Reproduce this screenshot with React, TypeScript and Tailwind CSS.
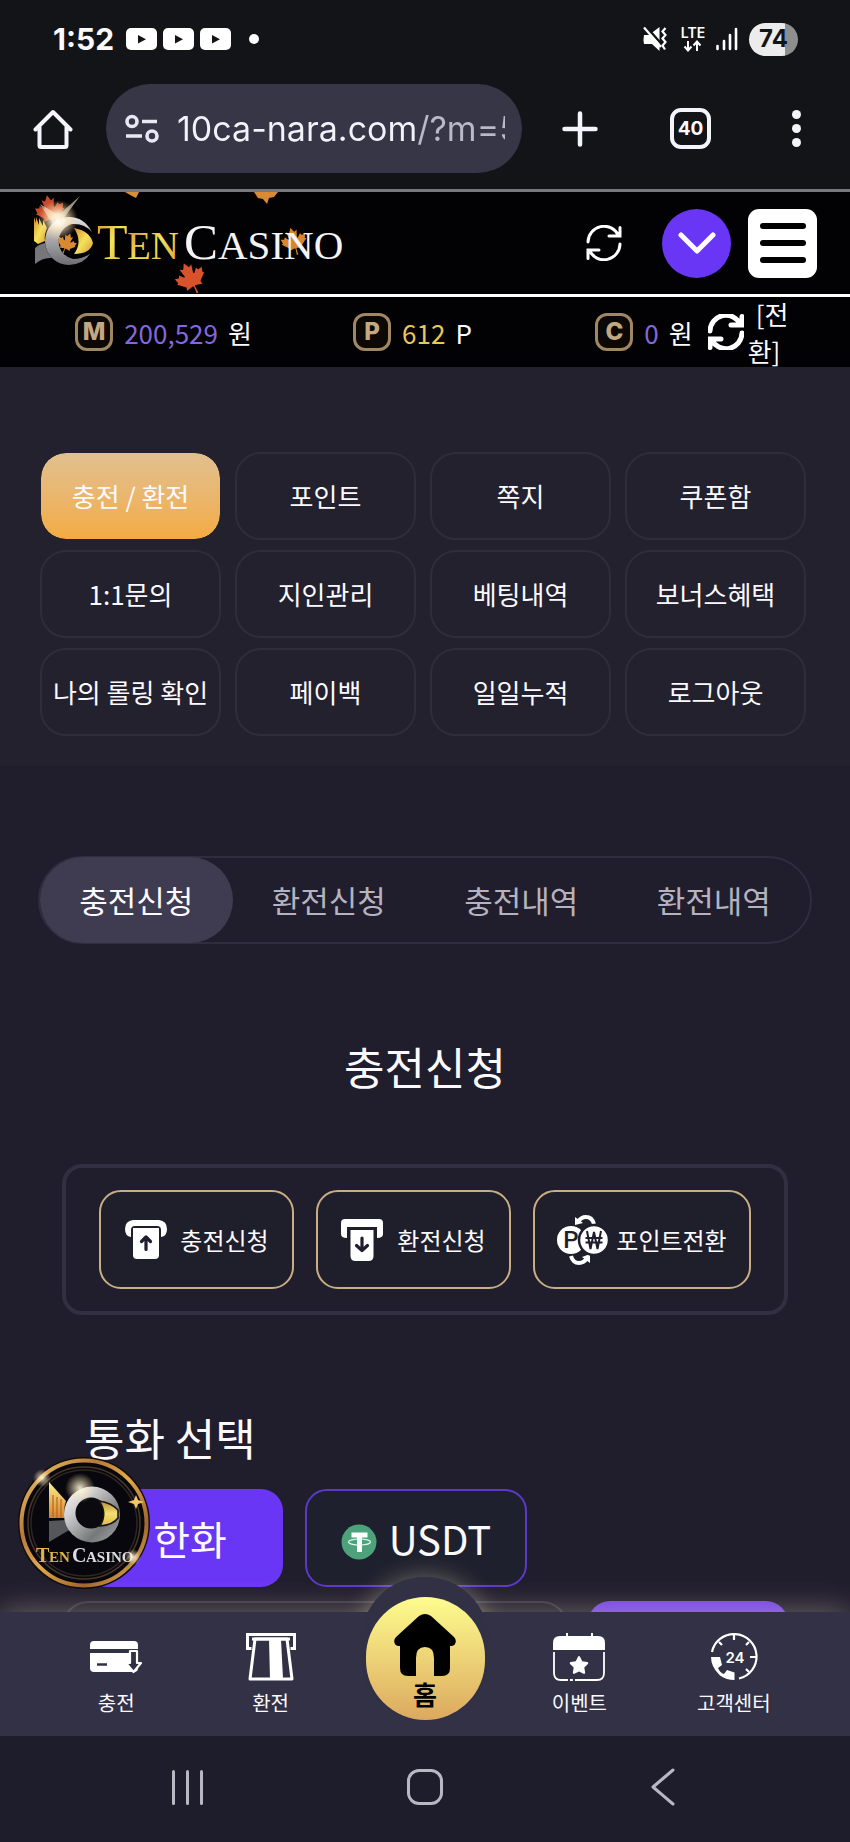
import React, { useState } from "react";
import { FaCanadianMapleLeaf, FaStar } from "react-icons/fa";

const menuItems = [
  "충전 / 환전",
  "포인트",
  "쪽지",
  "쿠폰함",
  "1:1문의",
  "지인관리",
  "베팅내역",
  "보너스혜택",
  "나의 롤링 확인",
  "페이백",
  "일일누적",
  "로그아웃",
];

const tabs = ["충전신청", "환전신청", "충전내역", "환전내역"];

const YoutubeIcon = () => (
  <svg width="31" height="22" viewBox="0 0 31 22">
    <rect width="31" height="22" rx="5" fill="#fff" />
    <path d="M12 7l8 4.300-8 4.300z" fill="#131418" />
  </svg>
);

const SyncIcon = ({ stroke }: { stroke: number }) => (
  <svg className="shrink-0" width="36" height="36" viewBox="0 0 36 36" fill="none" stroke="#fff" strokeWidth={stroke} strokeLinecap="round">
    <path d="M2 17A16 16 0 0 1 32.500 10.500M34 2.500v8.500h-11" />
    <path d="M34 19A16 16 0 0 1 3.500 25.500M2 33.500v-8.500h11" />
  </svg>
);

const StatusBar = () => (
  <div className="flex h-[84px] items-center justify-between pr-[52px] pb-[6px] pl-[53px]">
    <div className="flex items-center gap-[6px]">
      <span className="mr-[6px] font-['Inter'] text-[30px] leading-8 font-bold">1:52</span>
      <YoutubeIcon />
      <YoutubeIcon />
      <YoutubeIcon />
      <span className="ml-3 h-[10px] w-[10px] rounded-full bg-white" />
    </div>
    <div className="flex items-center">
      <svg width="25" height="26" viewBox="0 0 25 26">
        <path d="M1 9h5l10.500-8v24L9 18H1q-1-4.500 0-9z" fill="#fff" />
        <path d="M2.500 0L22 22" stroke="#131418" strokeWidth="2.500" />
        <path d="M1 1.500L18 21" stroke="#fff" strokeWidth="2.200" />
        <path d="M22.500 2l-3 3.500 3 3.500-3 3.500 3 3.500-3 3.500 2.500 4" stroke="#fff" strokeWidth="2.200" fill="none" />
      </svg>
      <svg className="ml-3" width="26" height="28" viewBox="0 0 26 28">
        <text x="13" y="13" textAnchor="middle" fontFamily="Inter" fontWeight="600" fontSize="14" fill="#fff">LTE</text>
        <path d="M8 16v9M4.500 21.500L8 25.500l3.500-4M17 26v-9.500M13.500 20.500l3.500-4 3.500 4" stroke="#fff" strokeWidth="2" fill="none" />
      </svg>
      <svg className="ml-[10px]" width="22" height="24" viewBox="0 0 22 24" stroke="#fff" strokeWidth="2.600" strokeLinecap="round">
        <path d="M1.500 19v3M8 14v8M14 8v14M20 2v20" />
      </svg>
      <span className="ml-[11px] flex h-[33px] w-[49px] items-center justify-center rounded-full bg-[linear-gradient(90deg,#ececec_74%,#8e8e8e_74%)] font-['Inter'] text-2xl leading-none font-bold text-[#131418]">
        74
      </span>
    </div>
  </div>
);

const AddressBar = () => (
  <div className="flex items-center pr-9 pb-4 pl-[33px]">
    <button aria-label="Home">
      <svg width="40" height="40" viewBox="0 0 40 40" fill="none" stroke="#f5f4fc" strokeWidth="4" strokeLinejoin="round" strokeLinecap="round">
        <path d="M2.500 20.500L20 3l17.500 17.500M6.500 18v18.500q0 1.500 1.500 1.500h24q1.500 0 1.500-1.500V18" />
      </svg>
    </button>
    <div className="ml-[33px] flex h-[89px] flex-1 items-center rounded-full bg-[#373646] pr-[17px] pl-[19px]">
      <svg className="shrink-0" width="34" height="30" viewBox="0 0 34 30" fill="none" stroke="#e8e7f4" strokeWidth="3.600">
        <circle cx="7" cy="7.500" r="5" />
        <circle cx="27" cy="22" r="5" />
        <path d="M17 7.500h15M1 22h16" />
      </svg>
      <input
        type="text"
        aria-label="Address"
        defaultValue="10ca-nara.com/?m=5"
        className="ml-[18px] h-12 w-full min-w-0 bg-[linear-gradient(90deg,#f3f2fb_240px,#bab8cb_240px)] bg-clip-text font-['Inter'] text-[34px] text-transparent outline-none"
      />
    </div>
    <button aria-label="New tab" className="ml-10">
      <svg width="36" height="36" viewBox="0 0 36 36" stroke="#f5f4fc" strokeWidth="4.500" strokeLinecap="round">
        <path d="M18 2.500v31M2.500 18h31" />
      </svg>
    </button>
    <button className="ml-[72px] flex h-[41px] w-[41px] items-center justify-center rounded-[11px] border-4 border-[#f5f4fc] font-['Inter'] text-[19px] leading-none font-bold">
      40
    </button>
    <button aria-label="Menu" className="ml-[67px] flex w-9 flex-col items-center gap-[5px]">
      <span className="h-[9px] w-[9px] rounded-full bg-[#f5f4fc]" />
      <span className="h-[9px] w-[9px] rounded-full bg-[#f5f4fc]" />
      <span className="h-[9px] w-[9px] rounded-full bg-[#f5f4fc]" />
    </button>
  </div>
);

const Logo = () => (
  <svg width="350" height="102" viewBox="0 0 350 102" role="img" aria-label="Ten Casino">
    <defs>
      <linearGradient id="gold" x1="0" x2="1" y1="0" y2="1">
        <stop offset="0" stopColor="#d98b2b" />
        <stop offset="0.500" stopColor="#f3e35c" />
        <stop offset="1" stopColor="#dd9a33" />
      </linearGradient>
      <linearGradient id="silver" x1="0" x2="0" y1="0" y2="1">
        <stop offset="0" stopColor="#e4e4e6" />
        <stop offset="0.500" stopColor="#a5a5a9" />
        <stop offset="1" stopColor="#6e6e72" />
      </linearGradient>
      <radialGradient id="flare">
        <stop offset="0" stopColor="#fff" />
        <stop offset="0.300" stopColor="#fff6dd" stopOpacity="0.900" />
        <stop offset="1" stopColor="#ffcf8a" stopOpacity="0" />
      </radialGradient>
    </defs>
    <g transform="rotate(-12 50 18)">
      <FaCanadianMapleLeaf x="34" y="3" size={32} color="#c8492a" />
    </g>
    <path d="M34 25l2 6v-6l3 8v-7l4 8v-6l4 8q-3 7-2 13l-7 3-4-3z" fill="url(#gold)" />
    <path d="M35 56q4-4 10-5 1 9 7 15-9-1-17 6z" fill="#77777b" />
    <path d="M92 40Q84 25 69 25A24 24 0 0 0 69 73Q84 72 90 62Q82 67 73 67A18 18 0 0 1 72 32Q84 31 92 40z" fill="url(#silver)" />
    <path d="M74 36q16 3 19 15-3 11-19 11 9-12 0-26z" fill="url(#gold)" />
    <g transform="rotate(20 67 52)">
      <FaCanadianMapleLeaf x="56" y="41" size={21} color="#d88a30" />
    </g>
    <circle cx="58" cy="28" r="20" fill="url(#flare)" />
    <path d="M55 26L80 4 61 30zM50 28L40 12 60 24z" fill="#ffeecb" opacity="0.600" />
    <path d="M125 0h14l-3 6-4-2z" fill="#d98f35" />
    <path d="M254 0h24l-4 5-5 1-2 6-4-5-5-1z" fill="#d98a35" />
    <g fontFamily="'Liberation Serif', serif">
      <text x="97" y="67" fontSize="50" fill="url(#gold)">T</text>
      <text x="127" y="67" fontSize="39" fill="url(#gold)">EN</text>
      <text x="184" y="67" fontSize="51" fill="#f4f4f6">C</text>
    </g>
    <g transform="rotate(-15 295 49)">
      <FaCanadianMapleLeaf x="280" y="35" size={28} color="#d8852b" />
    </g>
    <text x="218" y="67" fontSize="41" fill="#f4f4f6" fontFamily="'Liberation Serif', serif">ASINO</text>
    <g transform="rotate(-25 190 86)">
      <FaCanadianMapleLeaf x="174" y="70" size={33} color="#d8532b" />
    </g>
  </svg>
);

const Coin = ({ letter }: { letter: string }) => (
  <span className="flex h-[38px] w-[38px] items-center justify-center rounded-xl border-[3px] border-[#a08763] bg-[#0b0805] font-['Inter'] text-2xl leading-none font-extrabold text-[#c3a882]">
    {letter}
  </span>
);

const SiteHeader = () => (
  <header className="border-t-[3px] border-[#78767e] bg-[#020104]">
    <div className="flex h-[105px] items-center border-b-[3px] border-white pr-[33px]">
      <a href="#home">
        <Logo />
      </a>
      <button aria-label="Refresh" className="ml-auto">
        <SyncIcon stroke={3} />
      </button>
      <button aria-label="Open wallet" className="ml-10 flex h-[69px] w-[69px] items-center justify-center rounded-full bg-[#6a36f5]">
        <svg width="38" height="22" viewBox="0 0 38 22" fill="none" stroke="#fff" strokeWidth="5" strokeLinecap="round" strokeLinejoin="round">
          <path d="M3 3l16 16L35 3" />
        </svg>
      </button>
      <button aria-label="Open menu" className="ml-[17px] flex h-[69px] w-[69px] flex-col items-center justify-center gap-[11px] rounded-[11px] bg-white">
        <span className="h-[6px] w-[46px] rounded-full bg-black" />
        <span className="h-[6px] w-[46px] rounded-full bg-black" />
        <span className="h-[6px] w-[46px] rounded-full bg-black" />
      </button>
    </div>
    <div className="flex h-[70px] items-center pl-[39px] text-[26px]">
      <div className="flex flex-[249] items-center justify-center gap-[11px]">
        <Coin letter="M" />
        <p className="flex gap-[10px]"><span className="text-[#8467dc]">200,529</span>원</p>
      </div>
      <div className="flex flex-[249] items-center justify-center gap-[11px]">
        <Coin letter="P" />
        <p className="flex gap-[10px]"><span className="text-[#ecc65c]">612</span>P</p>
      </div>
      <div className="flex flex-[313] items-center justify-center gap-[11px]">
        <Coin letter="C" />
        <p className="flex gap-[10px]"><span className="text-[#8467dc]">0</span>원</p>
        <button className="ml-1 flex items-center gap-1 text-left leading-[37px]">
          <SyncIcon stroke={5} />
          <span className="w-11 indent-2">
            [전
            <br />
            환]
          </span>
        </button>
      </div>
    </div>
  </header>
);

const DepositIcon = () => (
  <svg width="44" height="40" viewBox="0 0 44 40">
    <path d="M9 0h26q8 1 8 9 0 7-6 8v-7q0-4-4-4H11q-4 0-4 4v7q-6-1-6-8 0-8 8-9z" fill="#fff" />
    <path d="M9 8h26v27q0 4-4 4H13q-4 0-4-4z" fill="#fff" />
    <path d="M22 29.500V18M17.500 21.500L22 17l4.500 4.500" stroke="#201d2d" strokeWidth="3.200" strokeLinecap="round" strokeLinejoin="round" fill="none" />
  </svg>
);

const WithdrawIcon = () => (
  <svg width="44" height="42" viewBox="0 0 44 42">
    <path d="M4 0h34q4 0 4 4v11q0 4-6 4V8H6v11q-6 0-6-4V4q0-4 4-4z" fill="#fff" />
    <path d="M9.500 11h23v26q0 5-5 5h-13q-5 0-5-5z" fill="#fff" />
    <path d="M21 19v12M15.500 26.500L21 31.500l5.500-5" stroke="#201d2d" strokeWidth="3.200" strokeLinecap="round" strokeLinejoin="round" fill="none" />
  </svg>
);

const ExchangeIcon = () => (
  <svg width="51" height="52" viewBox="0 0 51 52">
    <path d="M37 10q-2-7-8-7-5 0-8 5" stroke="#fff" strokeWidth="4" fill="none" />
    <path d="M18 3v8l8-2z" fill="#fff" />
    <path d="M14 42q2 7 8 7 5 0 8-5" stroke="#fff" strokeWidth="4" fill="none" />
    <path d="M33 49v-9l-8 3z" fill="#fff" />
    <circle cx="14" cy="26" r="14" fill="#fff" />
    <text x="14" y="34" textAnchor="middle" fontFamily="Roboto" fontSize="24" fontWeight="500" fill="#201d2d">P</text>
    <circle cx="37" cy="26" r="15" fill="#fff" stroke="#201d2d" strokeWidth="2.500" />
    <path d="M30 17l3.500 18L37 18l3.500 17L44 17M28.500 24h17M28.500 28.500h17" stroke="#201d2d" strokeWidth="2" fill="none" />
  </svg>
);

const ActionButtons = () => (
  <div className="mx-[62px] mt-[66px] flex gap-[22px] rounded-[20px] border-4 border-[#322f40] px-[33px] py-[22px] text-2xl">
    <button className="flex h-[99px] flex-1 items-center justify-center gap-3 rounded-[22px] border-2 border-[#c9ae85] bg-[#1f1f2c]">
      <DepositIcon />
      충전신청
    </button>
    <button className="flex h-[99px] flex-1 items-center justify-center gap-3 rounded-[22px] border-2 border-[#c9ae85] bg-[#1f1f2c]">
      <WithdrawIcon />
      환전신청
    </button>
    <button className="flex h-[99px] w-[218px] items-center justify-center gap-2 rounded-[22px] border-2 border-[#c9ae85] bg-[#1f1f2c]">
      <ExchangeIcon />
      포인트전환
    </button>
  </div>
);

const TetherIcon = () => (
  <svg width="36" height="36" viewBox="0 0 36 36">
    <circle cx="18" cy="18" r="17.500" fill="#4ea27b" />
    <path d="M10.500 8.500h16v5h-5.500v14.500h-5V13.500h-5.500z" fill="#fff" />
    <ellipse cx="18.500" cy="18" rx="11" ry="3" fill="none" stroke="#e4f4ec" strokeWidth="1.200" />
  </svg>
);

const FloatingLogo = () => (
  <svg width="132" height="132" viewBox="0 0 132 132" role="img" aria-label="Ten Casino">
    <defs>
      <linearGradient id="ring" x1="0" x2="1" y1="0" y2="1">
        <stop offset="0" stopColor="#f6d469" />
        <stop offset="0.300" stopColor="#b8783a" />
        <stop offset="0.500" stopColor="#e2a948" />
        <stop offset="0.750" stopColor="#a0662c" />
        <stop offset="1" stopColor="#f1c15c" />
      </linearGradient>
      <linearGradient id="ball" x1="0" x2="1" y1="0" y2="1">
        <stop offset="0" stopColor="#fff" />
        <stop offset="0.300" stopColor="#cfcfd0" />
        <stop offset="0.700" stopColor="#77787a" />
        <stop offset="1" stopColor="#a9a9ab" />
      </linearGradient>
      <linearGradient id="bars" x1="0" x2="0" y1="0" y2="1">
        <stop offset="0" stopColor="#fbf090" />
        <stop offset="1" stopColor="#d9822b" />
      </linearGradient>
      <linearGradient id="lens" x1="0" x2="0" y1="0" y2="1">
        <stop offset="0" stopColor="#b98a35" />
        <stop offset="0.500" stopColor="#f4df72" />
        <stop offset="1" stopColor="#e2b84c" />
      </linearGradient>
      <radialGradient id="spark">
        <stop offset="0" stopColor="#fffbe8" stopOpacity="0.900" />
        <stop offset="1" stopColor="#ffe3a0" stopOpacity="0" />
      </radialGradient>
    </defs>
    <circle cx="66" cy="66" r="66" fill="#120d0c" />
    <circle cx="66" cy="66" r="62.500" fill="#07070d" stroke="url(#ring)" strokeWidth="4" />
    <circle cx="66" cy="66" r="56" fill="none" stroke="#46372a" strokeWidth="1.500" />
    <circle cx="66" cy="66" r="53" fill="none" stroke="#2e2620" strokeWidth="1.500" />
    <path d="M31 25l17 19q-3 8-1 17H31z" fill="url(#bars)" />
    <path d="M35 38v22M39 40v21M43 42v19" stroke="#b5671f" strokeWidth="1.200" />
    <path d="M31 64l17-1q2 6 5 9L31 85z" fill="#55575a" />
    <circle cx="74" cy="57.500" r="28" fill="url(#ball)" />
    <circle cx="73" cy="56" r="15.500" fill="#0a0a0f" />
    <path d="M81 44q13 2 19 9v8q-5 7-18 8 8-13-1-25z" fill="url(#lens)" stroke="#17150f" strokeWidth="1.500" />
    <circle cx="62" cy="31" r="15" fill="url(#spark)" />
    <circle cx="24" cy="21" r="9" fill="url(#spark)" />
    <path d="M118 38l2 5 6 2-6 2-2 5-2-5-6-2 6-2z" fill="#f3c768" />
    <g fontFamily="'Liberation Serif', serif" fontWeight="700">
      <text x="18" y="105" fontSize="20" fill="#e0b447">T</text>
      <text x="31" y="105" fontSize="15" fill="#e0b447">EN</text>
      <text x="54" y="105" fontSize="20" fill="#dcdde2">C</text>
      <text x="68" y="105" fontSize="15" fill="#dcdde2">ASINO</text>
    </g>
    <circle cx="115" cy="100" r="8" fill="url(#spark)" />
  </svg>
);

const CardIcon = () => (
  <svg width="52" height="48" viewBox="0 0 52 48">
    <path d="M4 8h40q4 0 4 4v4H0v-4q0-4 4-4z" fill="#fff" />
    <path d="M0 20h48v15q0 4-4 4H4q-4 0-4-4z" fill="#fff" />
    <path d="M7 31.500h10" stroke="#323045" strokeWidth="2.500" />
    <path d="M40 18h7v12h4l-7.500 9-7.500-9h4z" fill="#323045" stroke="#fff" strokeWidth="2.200" strokeLinejoin="round" />
  </svg>
);

const AtmIcon = () => (
  <svg width="52" height="48" viewBox="0 0 52 48" fill="none" stroke="#fff" strokeWidth="3">
    <path d="M6.500 15.500h-4v-14h47v14h-4" />
    <path d="M10 6h32l5 40H5z" strokeLinejoin="round" fill="#323045" />
    <path d="M24 6h12l2 40H25z" fill="#fff" stroke="none" />
    <path d="M7 6h38" />
  </svg>
);

const CalendarIcon = () => (
  <svg width="52" height="48" viewBox="0 0 52 48">
    <path d="M14 0v5M39 0v5" stroke="#fff" strokeWidth="2" />
    <path d="M7 3h38q7 0 7 7v7H0v-7q0-7 7-7z" fill="#fff" />
    <path d="M1 19v21q0 7 7 7h36q7 0 7-7V19" stroke="#fff" strokeWidth="1.800" fill="none" strokeDasharray="39 2 3 2 200" />
    <FaStar x="16" y="22" size={20} color="#fff" />
  </svg>
);

const SupportIcon = () => (
  <svg width="52" height="48" viewBox="0 0 52 48">
    <path d="M4 19A22.500 22.500 0 1 1 31 45.500" stroke="#fff" strokeWidth="2.200" fill="none" />
    <path d="M26 1v6M11 9l3 3M41 9l-3 3M49 24h-7M41 39l-3-3" stroke="#fff" strokeWidth="2.200" />
    <text x="27" y="30" textAnchor="middle" fontFamily="Inter" fontSize="15" fontWeight="600" fill="#fff">24</text>
    <path d="M3 24h9l2 8-4 3q2 5 6 6l3-4 7.500 2.500v7.500q-8 0-14.500-4.500Q3 34 3 24z" fill="#fff" />
  </svg>
);

const NavItem = ({ icon, label }: { icon: React.ReactNode; label: string }) => (
  <a href="#nav" className="flex flex-1 flex-col items-center gap-2 pt-[21px] text-xl leading-7">
    {icon}
    {label}
  </a>
);

const BottomBar = () => (
  <footer className="fixed inset-x-0 bottom-0">
    <div className="relative">
      <div className="absolute inset-0 shadow-[0_0_30px_rgba(240,228,195,0.4)]" />
      <div className="absolute -top-[35px] left-1/2 h-32 w-32 -translate-x-1/2 rounded-full bg-[#323045] shadow-[0_0_24px_rgba(240,228,195,0.4)]" />
      <nav className="relative flex h-[124px] bg-[#323145] px-[39px]">
        <NavItem icon={<CardIcon />} label="충전" />
        <NavItem icon={<AtmIcon />} label="환전" />
        <div className="flex flex-1 justify-center">
          <a href="#home" className="relative -mt-[35px] flex h-36 w-32 flex-col items-center rounded-full bg-[#323045] pt-5">
            <span className="flex h-[123px] w-[119px] shrink-0 flex-col items-center rounded-full bg-linear-to-b from-[#fdfd8f] to-[#dba95f] pt-[17px] text-[26px] leading-9 font-bold text-black">
              <svg width="62" height="62" viewBox="0 0 62 62">
                <path d="M25 2q6-4 12 0l23 21q3 3 1 7-1 2-5 2v22q0 8-8 8h-8V44q0-11-9-11t-9 11v18h-8q-8 0-8-8V32q-4 0-5-2-2-4 1-7z" />
              </svg>
              홈
            </span>
          </a>
        </div>
        <NavItem icon={<CalendarIcon />} label="이벤트" />
        <NavItem icon={<SupportIcon />} label="고객센터" />
      </nav>
    </div>
    <div className="relative flex h-[106px] items-center bg-[#1e1d2c] px-[68px] pb-1">
      <button aria-label="Recent apps" className="flex flex-1 justify-center gap-[11px]">
        <span className="h-[35px] w-[3px] rounded-full bg-[#b9b8c2]" />
        <span className="h-[35px] w-[3px] rounded-full bg-[#b9b8c2]" />
        <span className="h-[35px] w-[3px] rounded-full bg-[#b9b8c2]" />
      </button>
      <button aria-label="System home" className="flex flex-1 justify-center">
        <span className="h-9 w-9 rounded-xl border-[3px] border-[#b9b8c2]" />
      </button>
      <button aria-label="Back" className="flex flex-1 justify-center">
        <svg width="24" height="38" viewBox="0 0 24 38" fill="none" stroke="#b9b8c2" strokeWidth="3" strokeLinecap="round" strokeLinejoin="round">
          <path d="M22 2L2 19l20 17" />
        </svg>
      </button>
    </div>
  </footer>
);

const App: React.FC = () => {
  const [activeMenu, setActiveMenu] = useState(0);
  const [activeTab, setActiveTab] = useState(0);

  return (
    <div className="min-h-screen overflow-hidden bg-[#201d2d] font-['Noto_Sans_CJK_KR',sans-serif] text-[#fbfaff]">
      <div className="bg-[#131418]">
        <StatusBar />
        <AddressBar />
      </div>
      <SiteHeader />

      <section className="grid grid-cols-4 gap-x-[14px] gap-y-[10px] bg-[#23212e] pt-[85px] pr-11 pb-[30px] pl-10">
        {menuItems.map((item, i) => (
          <button
            key={item}
            onClick={() => setActiveMenu(i)}
            className={
              i === activeMenu
                ? "h-[88px] rounded-[26px] border border-[#23212e] bg-linear-to-b from-[#e1c08f] to-[#f3ab41] bg-clip-padding pb-[2px] text-[26px] whitespace-nowrap"
                : "h-[88px] rounded-[26px] border-2 border-[#2f2d3b] pb-[2px] text-[26px] whitespace-nowrap"
            }
          >
            {item}
          </button>
        ))}
      </section>

      <main>
        <div className="mx-[38px] mt-[90px] flex h-[88px] rounded-full border-2 border-[#302d3e]">
          {tabs.map((tab, i) => (
            <button
              key={tab}
              onClick={() => setActiveTab(i)}
              className={
                i === activeTab
                  ? "-my-px flex-1 rounded-full bg-[#3f3b50] text-[31px]"
                  : "-my-px flex-1 text-[31px] text-[#b5b3bf]"
              }
            >
              {tab}
            </button>
          ))}
        </div>

        <h1 className="mt-[90px] text-center text-[44px] leading-[64px]">충전신청</h1>
        <ActionButtons />

        <section className="mt-[90px] px-[62px]">
          <h2 className="pl-[22px] text-[44px] leading-[64px]">통화 선택</h2>
          <div className="mt-5 flex gap-[22px] pl-[23px] text-[40px]">
            <button className="h-[98px] w-[198px] rounded-[22px] bg-[#6a36f5] pl-3">한화</button>
            <button className="flex h-[98px] w-[222px] items-center justify-center gap-3 rounded-[22px] border-2 border-[#5b39cb] bg-[#1e202d]">
              <span className="pt-2"><TetherIcon /></span>
              USDT
            </button>
          </div>
          <div className="mt-[14px] flex gap-5">
            <input
              type="text"
              aria-label="충전금액"
              className="h-[90px] min-w-0 flex-1 rounded-[26px] border-2 border-[#3a3747] px-6 text-[26px] outline-none"
            />
            <button aria-label="충전신청" className="h-[90px] w-[200px] rounded-[22px] bg-[#7544e6]" />
          </div>
        </section>
      </main>

      <BottomBar />
      <a href="#ten" className="fixed bottom-[253px] left-[18px]">
        <FloatingLogo />
      </a>
    </div>
  );
};

export default App;
